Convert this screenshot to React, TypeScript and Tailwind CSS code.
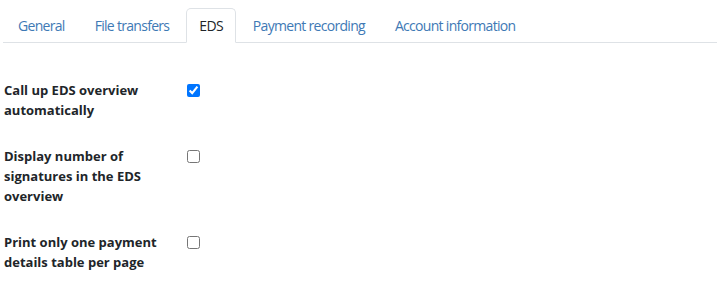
import React from "react";

const tabs = ["General", "File transfers", "EDS", "Payment recording", "Account information"];

const rows = [
  { label: "Call up EDS overview automatically", checked: true },
  { label: "Display number of signatures in the EDS overview", checked: false },
  { label: "Print only one payment details table per page", checked: false },
];

export default function App() {
  return (
    <div className="w-[726px] h-[289px] bg-white pl-[3px] pr-[9px] pt-[8px]" style={{ fontFamily: '"Open Sans", "Noto Sans", sans-serif' }}>
      <ul className="flex border-b border-[#dee2e6] text-[14px] leading-[21px]">
        {tabs.map((t) => (
          <li key={t} className="-mb-px mx-[2px]">
            <span
              className={
                "block px-[12px] py-[6px] border rounded-t-[5px] tracking-[-0.7px] " +
                (t === "EDS"
                  ? "border-[#dee2e6] border-b-white bg-white text-[#212529]"
                  : "border-transparent text-[#3e79b5]")
              }
            >
              {t}
            </span>
          </li>
        ))}
      </ul>
      <div className="mt-[37px] pl-[1px] flex flex-col gap-[26px]">
        {rows.map((r) => (
          <div key={r.label} className="flex items-start">
            <div className="w-[183px] pr-[10px] text-[13px] leading-[20px] font-bold text-[#212529]">
              {r.label}
            </div>
            <input
              type="checkbox"
              defaultChecked={r.checked}
              className="m-0 mt-[4px] w-[13px] h-[13px] accent-[#0075ff]"
            />
          </div>
        ))}
      </div>
    </div>
  );
}
